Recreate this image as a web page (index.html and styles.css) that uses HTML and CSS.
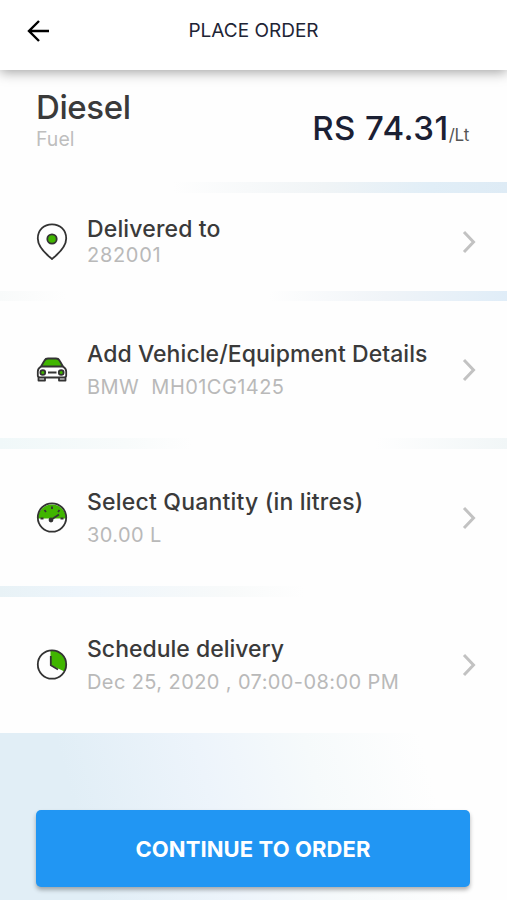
FILE: index.html
```html
<!DOCTYPE html>
<html lang="en">
<head>
<meta charset="utf-8">
<title>Place Order</title>
<link rel="stylesheet" href="styles.css">
</head>
<body>
<header class="topbar">
  <svg class="back" viewBox="0 0 24 24"><path d="M22 12H2M12 2L2 12L12 22"/></svg>
  <h1>PLACE ORDER</h1>
</header>
<main>
  <section class="card product">
    <div>
      <div class="name">Diesel</div>
      <div class="kind">Fuel</div>
    </div>
    <div class="price"><span class="amount">RS 74.31</span><span class="unit">/Lt</span></div>
  </section>
  <div class="strip strip-1"></div>
  <section class="card row address">
    <svg class="icon" viewBox="0 0 32 40"><path d="M16 37C12 33.500 1.800 26.500 1.800 16.500C1.800 8 8 2.300 16 2.300S30.200 8 30.200 16.500C30.200 26.500 20 33.500 16 37Z"/><circle class="green" cx="16" cy="17" r="4.700"/></svg>
    <div class="text"><div class="label l1">Delivered to</div><div class="value v1">282001</div></div>
    <svg class="chevron" viewBox="0 0 16 24"><path d="M3 2L12.500 12L3 22"/></svg>
  </section>
  <div class="strip strip-2"></div>
  <section class="card row">
    <svg class="icon" viewBox="0 0 32 40">
      <path class="green" d="M5 16.500L8.500 10.500Q9.500 8.500 12 8.500H20Q22.500 8.500 23.500 10.500L27 16.500Z"/>
      <path d="M5 16.500Q1.800 18.500 1.800 21.500V25.500Q1.800 27.500 4 27.500H28Q30.200 27.500 30.200 25.500V21.500Q30.200 18.500 27 16.500M2.500 27.500V30.500H9V27.500M23 27.500V30.500H29.500V27.500M12 22.500H20.500"/>
      <circle class="green" cx="6.800" cy="22.500" r="2.400"/><circle class="green" cx="25.200" cy="22.500" r="2.400"/>
    </svg>
    <div class="text"><div class="label l2">Add Vehicle/Equipment Details</div><div class="value v2">BMW&nbsp; MH01CG1425</div></div>
    <svg class="chevron" viewBox="0 0 16 24"><path d="M3 2L12.500 12L3 22"/></svg>
  </section>
  <div class="strip strip-3"></div>
  <section class="card row">
    <svg class="icon" viewBox="0 0 32 40">
      <path class="fill" d="M2 20.500A14 14 0 0 1 30 20.500Z"/><circle cx="16" cy="19.500" r="14.200"/>
      <path d="M4.500 20.500H7.500M24.500 20.500H27.500M16 8.500V11M8.500 12L10 14M23.500 12L22 14M15.500 21.500L23 16.500"/><circle class="dark" cx="15" cy="22" r="1.500"/>
    </svg>
    <div class="text"><div class="label l3">Select Quantity (in litres)</div><div class="value v3">30.00 L</div></div>
    <svg class="chevron" viewBox="0 0 16 24"><path d="M3 2L12.500 12L3 22"/></svg>
  </section>
  <div class="strip strip-4"></div>
  <section class="card row schedule">
    <svg class="icon" viewBox="0 0 32 40">
      <path class="fill" d="M14.500 20V6A14 14 0 0 1 28.500 26.500Z"/><circle cx="16" cy="19.500" r="14.200"/>
      <path d="M14.800 11V20.300L22 24.500"/>
    </svg>
    <div class="text"><div class="label l4">Schedule delivery</div><div class="value v4">Dec 25, 2020 , 07:00-08:00 PM</div></div>
    <svg class="chevron" viewBox="0 0 16 24"><path d="M3 2L12.500 12L3 22"/></svg>
  </section>
</main>
<footer><button class="continue">CONTINUE TO ORDER</button></footer>
</body>
</html>
```
FILE: styles.css
```css
* { box-sizing: border-box; }
body {
  margin: 0;
  height: 900px;
  overflow: hidden;
  display: flex;
  flex-direction: column;
  background: #fefefe;
  font-family: Inter, "Liberation Sans", sans-serif;
  color: #3a3a3a;
}
.topbar {
  position: relative;
  z-index: 1;
  flex: none;
  height: 70px;
  padding: 0 27px 9px;
  display: grid;
  grid-template-columns: 24px 1fr 24px;
  align-items: center;
  background: #fff;
  box-shadow: 0 2px 12px rgba(0, 0, 0, .38);
}
.back { width: 24px; height: 24px; fill: none; stroke: #000; stroke-width: 2.4; }
h1 {
  margin: 0;
  text-align: center;
  font-size: 19px;
  font-weight: 400;
  line-height: 24px;
  letter-spacing: 0;
  color: #1e2435;
}
.card { background: #fefefe; }
.product {
  height: 112px;
  padding: 17px 38px 0 36px;
  display: flex;
  justify-content: space-between;
}
.name { font-size: 33px; font-weight: 500; line-height: 40px; letter-spacing: -.4px; }
.kind { font-size: 19.5px; line-height: 24px; color: #bebebe; }
.price { padding-top: 19px; white-space: nowrap; color: #1b2033; line-height: 44px; }
.amount { font-size: 33px; font-weight: 500; letter-spacing: .5px; }
.unit { font-size: 17px; color: #555; position: relative; top: 1px; letter-spacing: -.2px; }
.row {
  height: 137px;
  padding: 0 30px 0 36px;
  display: flex;
  align-items: center;
}
.address { height: 98px; }
.schedule { height: 136px; }
.icon { flex: none; width: 32px; height: 40px; fill: none; stroke: #333; stroke-width: 1.8; stroke-linejoin: round; }
.green { fill: #40b500; }
.fill { fill: #40b500; stroke: none; }
.dark { fill: #333; }
.text { flex: 1; margin-left: 19px; white-space: nowrap; }
.label { font-size: 23px; font-weight: 450; line-height: 30px; }
.l1 { letter-spacing: .15px; }
.l2 { letter-spacing: .06px; }
.l3 { letter-spacing: .2px; }
.l4 { letter-spacing: 0; }
.value { margin-top: 4px; font-size: 20px; line-height: 28px; letter-spacing: .4px; color: #b9b9b9; }
.v1 { letter-spacing: .7px; }
.v2 { letter-spacing: .45px; }
.address .text { padding-bottom: 4px; }
.address .value { margin-top: 0; line-height: 22px; }
.chevron { flex: none; width: 16px; height: 24px; fill: none; stroke: #c2c2c2; stroke-width: 3; }
.strip { height: 11px; }
.strip-1 { background: linear-gradient(90deg, #fefefe 34%, #f0f4f6 64%, #e1eef7 85%, #deebf5); }
.strip-2 { height: 10px; background: linear-gradient(90deg, #f8fafa, #fefefe 13%, #fefefe 53%, #f0f4f8 76%, #e0edf8); }
.strip-3 { background: linear-gradient(90deg, #f0f8f9, #f8fbfb 25%, #fefefe 38%, #fefefe 74%, #f1f6f7); }
.strip-4 { background: linear-gradient(90deg, #e8f2f6, #edf5fb 15%, #f8fafa 45%, #fefefe 60%); }
footer {
  flex: 1;
  padding: 77px 37px 0 36px;
  background: linear-gradient(75deg, #e1eef6 18%, #edf4fb 43%, #f6fafb 63%, #fefefe 84%);
}
.continue {
  display: block;
  width: 100%;
  height: 77px;
  border: 0;
  border-radius: 5px;
  background: #2196f3;
  box-shadow: 0 3px 4px rgba(0, 0, 0, .3);
  color: #fff;
  font: 700 22px/28px Inter, "Liberation Sans", sans-serif;
  letter-spacing: .1px;
}
```
